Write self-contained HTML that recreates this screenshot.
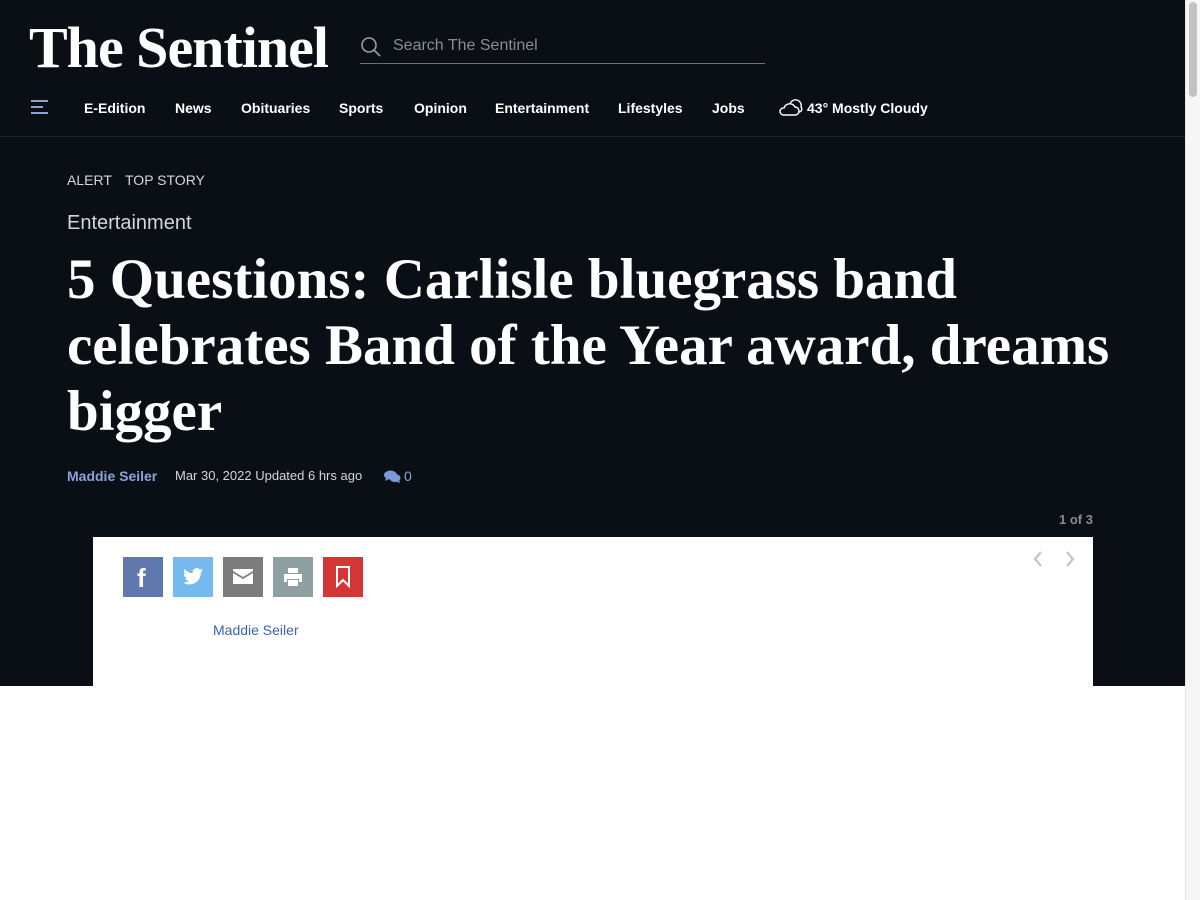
<!DOCTYPE html>
<html><head><meta charset="utf-8"><style>
*{margin:0;padding:0;box-sizing:border-box}
html,body{width:1200px;height:900px;overflow:hidden;background:#fff;font-family:"Liberation Sans",sans-serif}
.dark{position:absolute;left:0;top:0;width:1185px;height:686px;background:#0a0e15}
.sb{position:absolute;left:1185px;top:0;width:15px;height:900px;background:#f6f6f6;border-left:1px solid #e6e6e6}
.sb div{position:absolute;left:3px;top:2px;width:8px;height:95px;border-radius:4px;background:#c2c2c2}
.logo{position:absolute;left:29px;top:14px;font-family:"Liberation Serif",serif;font-weight:bold;font-size:58px;color:#fff;letter-spacing:-1px}
.search{position:absolute;left:360px;top:28px;width:405px;height:36px;border-bottom:1px solid #6b6e73;color:#8a8d92;font-size:16px}
.search span{position:absolute;left:33px;top:9px}
.nav{position:absolute;top:100px;color:#fff;font-size:14px;font-weight:bold}
.line{position:absolute;left:0;top:136px;width:1185px;height:1px;background:#22262d}
.tag{position:absolute;top:172px;color:#d5d6d8;font-size:14px}
.sec{position:absolute;left:67px;top:212px;color:#d5d6d8;font-size:20px}
h1{position:absolute;left:67px;top:247px;width:1065px;font-family:"Liberation Serif",serif;font-weight:bold;font-size:57px;line-height:66px;color:#fff;letter-spacing:0}
.meta{position:absolute;top:468px;font-size:13px}
.box{position:absolute;left:93px;top:537px;width:1000px;height:149px;background:#fff}
.btn{position:absolute;top:20px;width:40px;height:40px}
</style></head><body>
<div class="dark"></div>
<div class="sb"><div></div></div>
<div class="logo">The Sentinel</div>
<div class="search"><svg style="position:absolute;left:0;top:8px" width="22" height="22" viewBox="0 0 22 22" fill="none" stroke="#9a9da2" stroke-width="1.6"><circle cx="9" cy="9" r="7"/><path d="M14 14l6 6"/></svg><span>Search The Sentinel</span></div>
<svg style="position:absolute;left:31px;top:100px" width="18" height="14"><rect y="0" width="17" height="2" fill="#8aa4d0"/><rect y="6" width="12" height="2" fill="#8aa4d0"/><rect y="12" width="17" height="2" fill="#8aa4d0"/></svg>
<div class="nav" style="left:84px">E-Edition</div>
<div class="nav" style="left:175px">News</div>
<div class="nav" style="left:241px">Obituaries</div>
<div class="nav" style="left:339px">Sports</div>
<div class="nav" style="left:414px">Opinion</div>
<div class="nav" style="left:495px">Entertainment</div>
<div class="nav" style="left:618px">Lifestyles</div>
<div class="nav" style="left:712px">Jobs</div>
<svg style="position:absolute;left:778px;top:99px" width="26" height="18" viewBox="0 0 26 18" fill="none" stroke="#fff" stroke-width="1.4"><path d="M5 16h12a4 4 0 0 0 0-8 6 6 0 0 0-11 1 3.5 3.5 0 0 0-1 7z"/><path d="M12 5a5 5 0 0 1 11 3 3 3 0 0 1-2 5"/></svg>
<div class="nav" style="left:807px">43° Mostly Cloudy</div>
<div class="line"></div>
<div class="tag" style="left:67px">ALERT</div>
<div class="tag" style="left:125px">TOP STORY</div>
<div class="sec">Entertainment</div>
<h1>5 Questions: Carlisle bluegrass band celebrates Band of the Year award, dreams bigger</h1>
<div class="meta" style="left:67px;color:#8aa4d8;font-weight:bold;font-size:14px">Maddie Seiler</div>
<div class="meta" style="left:175px;color:#d5d6d8">Mar 30, 2022 Updated 6 hrs ago</div>
<svg style="position:absolute;left:384px;top:470px" width="17" height="13" viewBox="0 0 17 13" fill="#7b9bd8"><ellipse cx="6.5" cy="5" rx="6.5" ry="4.5"/><path d="M2 8l-1 3 4-2z"/><ellipse cx="11" cy="8" rx="5.5" ry="4"/><path d="M15 10l1 3-3-1z"/></svg>
<div class="meta" style="left:404px;color:#8aa4d8;font-size:14px">0</div>
<div style="position:absolute;left:1059px;top:512px;color:#8a8d92;font-size:13px;font-weight:bold">1 of 3</div>
<div class="box">
<div class="btn" style="left:30px;background:#5f78ae"><span style="position:absolute;left:14px;top:6px;color:#fff;font-weight:bold;font-size:26px">f</span></div>
<div class="btn" style="left:80px;background:#76b9ef"><svg style="position:absolute;left:10px;top:11px" width="20" height="17" viewBox="0 0 24 20" fill="#fff"><path d="M24 2.4a9.8 9.8 0 0 1-2.8.8A4.9 4.9 0 0 0 23.3.4a9.9 9.9 0 0 1-3.1 1.2 4.9 4.9 0 0 0-8.4 4.5A14 14 0 0 1 1.7.9a4.9 4.9 0 0 0 1.5 6.6 4.9 4.9 0 0 1-2.2-.6 4.9 4.9 0 0 0 3.9 4.9 4.9 4.9 0 0 1-2.2.1 4.9 4.9 0 0 0 4.6 3.4A9.9 9.9 0 0 1 0 17.3 14 14 0 0 0 7.5 19.5c9.1 0 14-7.5 14-14v-.6A10 10 0 0 0 24 2.4z"/></svg></div>
<div class="btn" style="left:130px;background:#7c7c7c"><svg style="position:absolute;left:10px;top:12px" width="20" height="15" viewBox="0 0 20 15" fill="#fff"><path d="M0 0h20v2L10 8 0 2z"/><path d="M0 4l10 6 10-6v11H0z"/></svg></div>
<div class="btn" style="left:180px;background:#8fa0a3"><svg style="position:absolute;left:10px;top:10px" width="20" height="20" viewBox="0 0 20 20" fill="#fff"><path d="M5 1h10v5H5z"/><path d="M1 7h18v8h-3v-3H4v3H1z"/><path d="M5 13h10v6H5z"/></svg></div>
<div class="btn" style="left:230px;background:#d43535"><svg style="position:absolute;left:13px;top:9px" width="14" height="22" viewBox="0 0 14 22" fill="none" stroke="#fff" stroke-width="2"><path d="M1 1h12v19l-6-6-6 6z"/></svg></div>
<div style="position:absolute;left:120px;top:85px;color:#3b64a8;font-size:14px">Maddie Seiler</div>
<svg style="position:absolute;left:938px;top:13px" width="60" height="18" fill="none" stroke="#c4c4c4" stroke-width="2.2"><path d="M10 2L4 9l6 7"/><path d="M36 2l6 7-6 7"/></svg>
</div>
</body></html>
